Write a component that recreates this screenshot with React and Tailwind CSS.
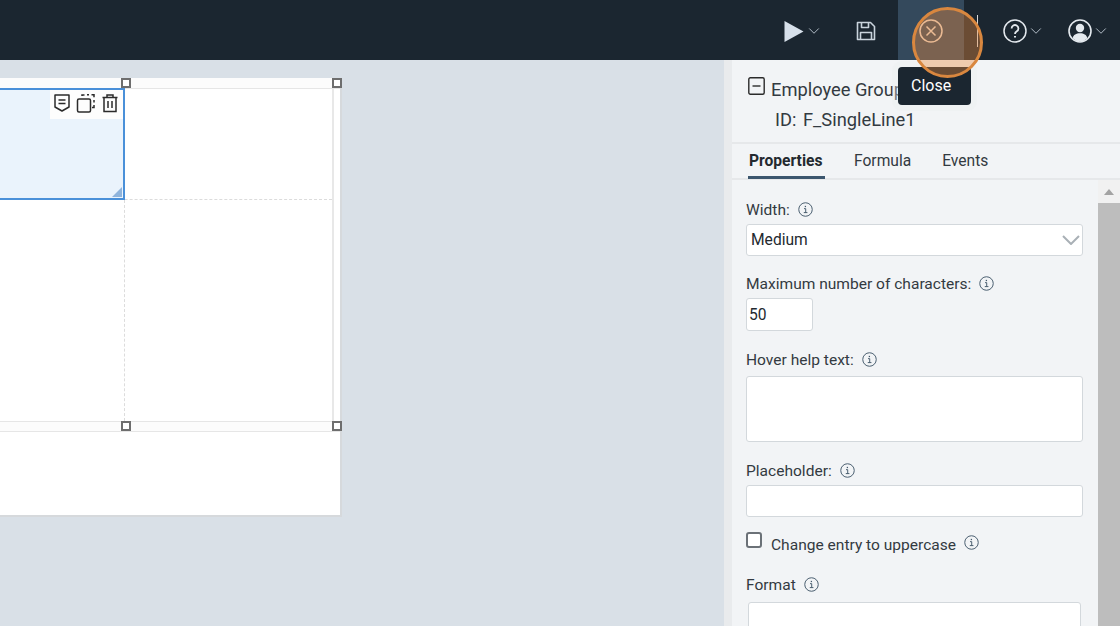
import React from 'react';
import { ChevronDown } from 'lucide-react';

const Info = ({ className = '' }) => (
  <svg viewBox="0 0 14 14" className={`w-[15px] h-[15px] shrink-0 ${className}`} fill="none" stroke="#44586a" strokeWidth="0.9">
    <circle cx="7" cy="7" r="6.3" />
    <path d="M5.6 6.2h1.6v3.6M5.4 9.9h3.4" />
    <path d="M6.9 3.6v1.2" strokeWidth="1.2" />
  </svg>
);

const Caret = () => <ChevronDown className="w-[18px] h-[18px] mt-[2px] text-[#b4bec8]" strokeWidth={1.3} />;

const Handle = ({ className }) => (
  <div className={`absolute w-[10px] h-[10px] bg-white border-2 border-[#6e6e6e] ${className}`} />
);

const Field = ({ label, className = '', gap = 'gap-[8px]', children }) => (
  <div className={className}>
    <div className={`flex items-center ${gap} h-[20px] text-[15.55px] leading-[20px] text-[#333a41]`}>
      <span>{label}</span>
      <Info className="-mt-[2px]" />
    </div>
    {children}
  </div>
);

const inputCls = 'bg-white border border-[#d3d8dc] rounded-[3px]';

const TopBar = () => (
  <div className="h-[60px] bg-[#1b2630] flex items-center shrink-0 pl-[784px]">
    <svg viewBox="0 0 20 22" className="w-[20px] h-[23px] mt-[2px] mr-[1px]">
      <path d="M0.5 0.5v21L19.5 11z" fill="#d7e0ea" />
    </svg>
    <Caret />
    <svg viewBox="0 0 20 20" className="w-[20px] h-[20px] mt-[2px] ml-[33px]" fill="none" stroke="#c9d3dc" strokeWidth="1.6" strokeLinejoin="round">
      <path d="M1.5 1.5h13l4 4v13h-17z" />
      <path d="M5.5 1.5v5h7v-5M4.5 18.5v-7h11v7" />
    </svg>
    <div className="w-[66px] h-[60px] ml-[22px] pt-[2px] bg-[#34495c] flex items-center justify-center">
      <svg viewBox="0 0 24 24" className="w-[24px] h-[24px]" fill="none" stroke="#e8d7c8" strokeWidth="1.5">
        <circle cx="12" cy="12" r="11" />
        <path d="M7.5 7.5l9 9M16.5 7.5l-9 9" />
      </svg>
    </div>
    <div className="w-px h-[32px] mt-[2px] ml-[13px] bg-[#d9d9d9]" />
    <svg viewBox="0 0 24 24" className="w-[24px] h-[24px] mt-[2px] ml-[25px]" fill="none" stroke="#e4e9ee" strokeWidth="1.5">
      <circle cx="12" cy="12" r="11" />
      <path d="M8.6 9.4a3.4 3.4 0 1 1 5.2 2.9c-1.1.7-1.8 1.3-1.8 2.6" strokeWidth="1.8" />
      <path d="M12 17v1.6" strokeWidth="2" />
    </svg>
    <Caret />
    <svg viewBox="0 0 24 24" className="w-[24px] h-[24px] mt-[2px] ml-[23px]">
      <circle cx="12" cy="12" r="11" fill="none" stroke="#e4e9ee" strokeWidth="1.6" />
      <circle cx="12" cy="9" r="4.2" fill="#e4e9ee" />
      <path d="M4.6 19.2c.8-3.6 3.6-5 7.4-5s6.6 1.4 7.4 5A10.6 10.6 0 0 1 12 22.4a10.6 10.6 0 0 1-7.4-3.2z" fill="#e4e9ee" />
    </svg>
    <Caret />
  </div>
);

const Canvas = () => (
  <div className="relative w-[342px] h-[439px] mt-[18px] bg-white border-r-2 border-b-2 border-[#d6d9dc]">
    <div className="h-[11px] bg-[#fcfcfc] border-b border-[#e6e6e6]" />
    <div className="h-[332px] mr-[6px] border-r-2 border-[#e8e8e8] flex flex-col">
      <div className="h-[111px] flex border-b border-dashed border-[#dcdcdc]">
        <div className="relative w-[125px] h-[112px] -mt-px bg-[#eaf3fc] border-2 border-l-0 border-[#4a90d9]">
          <div className="absolute top-0 right-0 w-[73px] h-[29px] bg-[#fdfdfd] flex items-start pl-[3px] pt-[3px] gap-[5px]">
            <svg viewBox="0 0 18 20" className="w-[18px] h-[20px]" fill="none" stroke="#2b2b2b" strokeWidth="1.5">
              <path d="M2 2h14v12l-7 4-7-4z" strokeLinejoin="round" />
              <path d="M5.5 7h7M5.5 10.5h7" />
            </svg>
            <svg viewBox="0 0 20 20" className="w-[20px] h-[20px]" fill="none" stroke="#2b2b2b" strokeWidth="1.5">
              <rect x="1.5" y="6" width="13" height="13" rx="1.5" />
              <path d="M6 3V2h2.5M11 1.8h2M15.5 1.8h2.5v2.5M18 7v2.5M18 12v2.5h-2" />
            </svg>
            <svg viewBox="0 0 18 20" className="w-[18px] h-[20px]" fill="none" stroke="#2b2b2b" strokeWidth="1.5">
              <path d="M1.5 4.5h15M6 4.5V2h6v2.5M3 4.5V18.5h12V4.5M7 8v7M11 8v7" />
            </svg>
          </div>
          <div className="absolute right-[1px] bottom-[1px] w-0 h-0 border-l-[10px] border-l-transparent border-b-[10px] border-b-[#8fb4dc]" />
        </div>
        <div className="flex-1" />
      </div>
      <div className="flex-1 w-[125px] border-r border-dashed border-[#dcdcdc]" />
    </div>
    <div className="h-[11px] bg-[#fcfcfc] border-y border-[#e6e6e6]" />
    <Handle className="left-[121px] top-0" />
    <Handle className="left-[332px] top-0" />
    <Handle className="left-[121px] top-[343px]" />
    <Handle className="left-[332px] top-[343px]" />
  </div>
);

const Panel = () => (
  <div className="w-[396px] h-full shrink-0 border-l-[8px] border-[#e9ebed] bg-[#f2f4f6] flex flex-col overflow-hidden">
    <div className="h-[84px] shrink-0 pl-[16px] pt-[16px] border-b-2 border-[#e6e8ea] text-[18.3px] leading-[26px] text-[#333a41]">
      <div className="flex items-start">
        <svg viewBox="0 0 17 18" className="w-[17px] h-[18px] mt-px" fill="none" stroke="#2b2b2b" strokeWidth="1.4">
          <rect x="0.8" y="0.8" width="15.4" height="16.4" rx="1.5" />
          <path d="M4.5 9h8" />
        </svg>
        <span className="ml-[6px] mt-[1px]">Employee Group</span>
      </div>
      <div className="flex mt-[4px] ml-[27px]">
        <span className="w-[28px]">ID:</span>
        <span>F_SingleLine1</span>
      </div>
    </div>
    <div className="h-[36px] shrink-0 flex pl-[16px] border-b-2 border-[#e6e8ea] text-[15.6px] leading-[35px] text-[#333a41]">
      <div className="w-[77px] h-[35px] pl-[1px] border-b-[3px] border-[#3b566e] font-bold text-[#23292f]">Properties</div>
      <div className="ml-[29px]">Formula</div>
      <div className="ml-[31px]">Events</div>
    </div>
    <div className="flex-1 flex min-h-0">
      <div className="flex-1 pl-[14px] pr-[15px] pt-[20px] overflow-hidden">
        <Field label="Width:">
          <div className={`${inputCls} mt-[4px] h-[32px] flex items-center justify-between pl-[4px] pr-[2px] text-[15.6px] text-[#23292f]`}>
            <span className="mt-[2px]">Medium</span>
            <svg viewBox="0 0 18 10" className="w-[18px] h-[10px]" fill="none" stroke="#a9b0b6" strokeWidth="2">
              <path d="M1 1l8 8 8-8" />
            </svg>
          </div>
        </Field>
        <Field label="Maximum number of characters:" className="mt-[18px]">
          <div className={`${inputCls} mt-[4px] w-[67px] h-[33px] flex items-center pl-[2px] pt-[2px] text-[15.6px] text-[#23292f]`}>50</div>
        </Field>
        <Field label="Hover help text:" className="mt-[19px]">
          <div className={`${inputCls} mt-[6px] h-[66px]`} />
        </Field>
        <Field label="Placeholder:" className="mt-[19px]">
          <div className={`${inputCls} mt-[4px] h-[32px]`} />
        </Field>
        <div className="flex items-start mt-[15px]">
          <div className="w-[16px] h-[16px] bg-white border-2 border-[#6b7177] rounded-[3px]" />
          <span className="ml-[9px] mt-[3px] text-[15.55px] leading-[20px] text-[#333a41]">Change entry to uppercase</span>
          <Info className="ml-[8px] mt-[3px]" />
        </div>
        <Field label="Format" className="mt-[20px]">
          <div className={`${inputCls} mt-[7px] ml-[2px] mr-[2px] h-[40px]`} />
        </Field>
      </div>
      <div className="w-[22px] shrink-0 flex flex-col">
        <div className="h-[23px] bg-[#f1f1f1] flex items-center justify-center">
          <div className="w-0 h-0 border-x-[5px] border-x-transparent border-b-[6px] border-b-[#a3a3a3]" />
        </div>
        <div className="flex-1 bg-[#bdbdbd]" />
      </div>
    </div>
  </div>
);

export default function App() {
  return (
    <div className="relative w-[1120px] h-[626px] overflow-hidden flex flex-col bg-[#d9e0e7] font-['Roboto',sans-serif]">
      <TopBar />
      <div className="flex-1 flex min-h-0 justify-between">
        <Canvas />
        <Panel />
      </div>
      <div className="absolute left-[898px] top-[67px] px-[13px] pt-[9px] w-[73px] h-[38px] bg-[#1b2630] rounded-[4px] shadow-[0_0_0_6px_rgba(235,237,239,0.35)] text-[16px] leading-[20px] text-white">Close</div>
      <div className="absolute left-[912px] top-[7px] w-[71px] h-[71px] rounded-full bg-[rgba(240,140,60,0.38)] border-[3px] border-[#d9873f]" />
    </div>
  );
}
